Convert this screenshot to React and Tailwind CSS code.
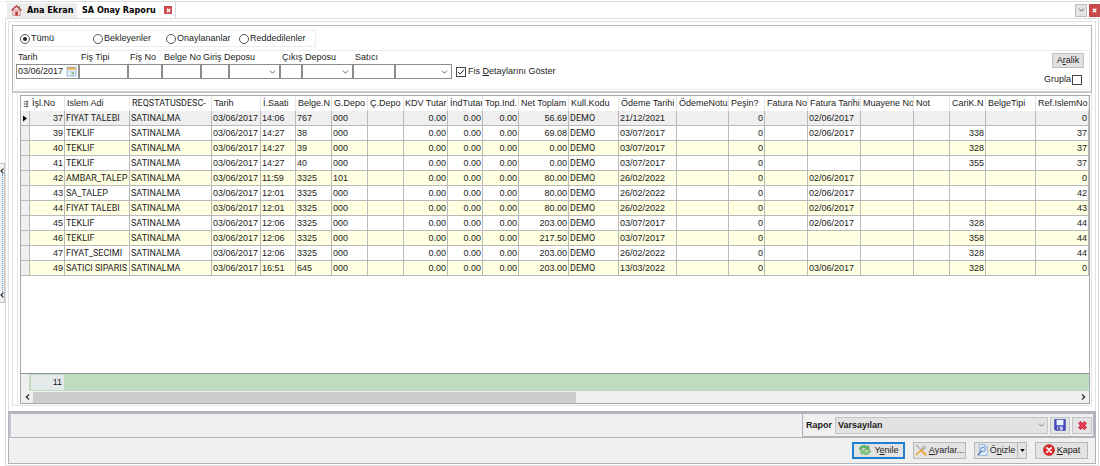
import React, { useState } from 'react'

const COLUMNS = [
  { key: 'no', label: 'İşl.No', col: 'w-[35px]', align: 'right' },
  { key: 'ad', label: 'Islem Adi', col: 'w-[65px]', font: 'font-[Roboto,sans-serif]' },
  { key: 'status', label: 'REQSTATUSDESC-', col: 'w-[82px]', font: 'font-[Roboto,sans-serif]' },
  { key: 'tarih', label: 'Tarih', col: 'w-[49px]' },
  { key: 'saat', label: 'İ.Saati', col: 'w-[35px]' },
  { key: 'belge', label: 'Belge.N', col: 'w-[36px]' },
  { key: 'gDepo', label: 'G.Depo', col: 'w-[36px]' },
  { key: 'cDepo', label: 'Ç.Depo', col: 'w-[36px]' },
  { key: 'kdv', label: 'KDV Tutar', col: 'w-[44px]', align: 'right' },
  { key: 'ind', label: 'İndTutar', col: 'w-[35px]', align: 'right' },
  { key: 'topInd', label: 'Top.Ind.', col: 'w-[36px]', align: 'right' },
  { key: 'net', label: 'Net Toplam', col: 'w-[50px]', align: 'right' },
  { key: 'kull', label: 'Kull.Kodu', col: 'w-[50px]', font: 'font-[Roboto,sans-serif]' },
  { key: 'odeme', label: 'Ödeme Tarihi', col: 'w-[58px]' },
  { key: 'not1', label: 'ÖdemeNotu', col: 'w-[52px]' },
  { key: 'pesin', label: 'Peşin?', col: 'w-[36px]', align: 'right' },
  { key: 'faturaNo', label: 'Fatura No', col: 'w-[43px]' },
  { key: 'fatura', label: 'Fatura Tarihi', col: 'w-[53px]' },
  { key: 'muayene', label: 'Muayene No', col: 'w-[53px]' },
  { key: 'not2', label: 'Not', col: 'w-[36px]' },
  { key: 'cari', label: 'CariK.N', col: 'w-[36px]', align: 'right' },
  { key: 'tip', label: 'BelgeTipi', col: 'w-[50px]' },
  { key: 'ref', label: 'Ref.IslemNo', col: '', align: 'right' },
]

const makeRow = (no, ad, saat, belge, gDepo, net, odeme, fatura, cari, ref) => ({
  no, ad, saat, belge, gDepo, net, odeme, fatura, cari, ref,
  status: 'SATINALMA',
  tarih: '03/06/2017',
  kdv: '0.00',
  ind: '0.00',
  topInd: '0.00',
  kull: 'DEMO',
  pesin: '0',
})

const ROWS = [
  makeRow(37, 'FIYAT TALEBI', '14:06', '767', '000', '56.69', '21/12/2021', '02/06/2017', '', '0'),
  makeRow(39, 'TEKLIF', '14:27', '38', '000', '69.08', '03/07/2017', '02/06/2017', '338', '37'),
  makeRow(40, 'TEKLIF', '14:27', '39', '000', '0.00', '03/07/2017', '', '328', '37'),
  makeRow(41, 'TEKLIF', '14:27', '40', '000', '0.00', '03/07/2017', '', '355', '37'),
  makeRow(42, 'AMBAR_TALEP', '11:59', '3325', '101', '80.00', '26/02/2022', '02/06/2017', '', '0'),
  makeRow(43, 'SA_TALEP', '12:01', '3325', '000', '80.00', '26/02/2022', '02/06/2017', '', '42'),
  makeRow(44, 'FIYAT TALEBI', '12:01', '3325', '000', '80.00', '26/02/2022', '02/06/2017', '', '43'),
  makeRow(45, 'TEKLIF', '12:06', '3325', '000', '203.00', '03/07/2017', '02/06/2017', '328', '44'),
  makeRow(46, 'TEKLIF', '12:06', '3325', '000', '217.50', '03/07/2017', '', '358', '44'),
  makeRow(47, 'FIYAT_SECIMI', '12:06', '3325', '000', '203.00', '26/02/2022', '', '328', '44'),
  makeRow(49, 'SATICI SIPARIS', '16:51', '645', '000', '203.00', '13/03/2022', '03/06/2017', '328', '0'),
]

const STATUSES = ['Tümü', 'Bekleyenler', 'Onaylananlar', 'Reddedilenler']

const Chevron = ({ className }) => (
  <svg viewBox="0 0 8 5" className={className} fill="none" stroke="currentColor" strokeWidth="1.1">
    <path d="M0.8 0.8 4 4 7.2 0.8" />
  </svg>
)

const HomeIcon = () => (
  <svg viewBox="0 0 12 12" className="h-[11px] w-[11px]">
    <path d="M2 5.5h8v6H2z" fill="#f4dcdc" stroke="#b05a5a" strokeWidth="0.6" />
    <path d="M0.6 6 6 1l5.4 5" fill="none" stroke="#b8474a" strokeWidth="1.7" />
    <path d="M4.6 7.2h3v4.3h-3z" fill="#c03a3e" />
    <path d="M8.6 1.4h1.2v2H8.6z" fill="#8a6a6a" />
  </svg>
)

const CalendarIcon = () => (
  <svg viewBox="0 0 12 12" className="h-[11px] w-[11px]">
    <path d="M1.5 1.5h9v9h-9z" fill="#f4f8fb" stroke="#8fb4cc" strokeWidth="0.8" />
    <path d="M1.5 1.5h9V4h-9z" fill="#e9a94e" />
    <path d="M3 5.7h6M3 7.6h2.4" stroke="#9fc0d6" strokeWidth="0.8" />
    <path d="M6 6.8h3v2.4H6z" fill="#7fb58a" />
  </svg>
)

const RefreshIcon = () => (
  <svg viewBox="0 0 14 12" className="h-3 w-[14px]">
    <path d="M1 5.2C1.6 1.6 6.400.1 9.200 2.500L10.800 1.400 11.400 6 6.600 5.800 7.800 4.400C6.200 3.200 4.200 3.600 3.600 5.400z" fill="#62b562" stroke="#4b9a50" strokeWidth="0.4" />
    <path d="M13 6.800C12.400 10.400 7.600 11.900 4.800 9.500L3.200 10.600 2.600 6l4.800.2L6.200 7.600C7.800 8.800 9.800 8.400 10.400 6.600z" fill="#85c983" stroke="#4b9a50" strokeWidth="0.4" />
  </svg>
)

const ToolsIcon = () => (
  <svg viewBox="0 0 13 13" className="h-3 w-3" fill="none" strokeLinecap="round">
    <path d="M1.600 11.600 8 5.200" stroke="#e8ad4c" strokeWidth="1.800" />
    <path d="M8 5.500c-.9-2 .4-4 2.500-4L9.300 3l.8 1.200 1.700-.8c.2 2-1.800 3.300-3.800 2.100z" fill="#b7bcc1" stroke="#9aa0a6" strokeWidth="0.5" />
    <path d="M1.500 1.200 6.500 6.400" stroke="#a9aeb3" strokeWidth="1.400" />
    <path d="M7 7l4.300 4.500" stroke="#eba43b" strokeWidth="2.300" />
  </svg>
)

const PreviewIcon = () => (
  <svg viewBox="0 0 12 13" className="h-3 w-[11px]">
    <path d="M2.500.6h6l2.600 2.600v9.200H2.500z" fill="#e6f0fb" stroke="#7fa3d0" strokeWidth="0.8" />
    <path d="M8.500.6v2.600h2.600" fill="#c4d9f1" stroke="#7fa3d0" strokeWidth="0.7" />
    <circle cx="6.500" cy="6" r="2.500" fill="#cfe4fa" stroke="#5b84c0" strokeWidth="1" />
    <path d="M4.700 8 1.200 11.800" stroke="#4c6fae" strokeWidth="1.500" strokeLinecap="round" />
  </svg>
)

const CloseIcon = () => (
  <svg viewBox="0 0 13 13" className="h-3 w-3">
    <circle cx="6.500" cy="6.500" r="6" fill="#dd2a2a" stroke="#b81a1a" strokeWidth="0.6" />
    <path d="M4.200 4.200l4.600 4.600M8.800 4.200 4.200 8.800" stroke="#fff" strokeWidth="1.900" strokeLinecap="round" />
  </svg>
)

const SaveIcon = () => (
  <svg viewBox="0 0 12 12" className="h-3 w-3">
    <path d="M.6.6h10.800v10.800H1.800L.6 10.200z" fill="#4a4ac6" stroke="#33339c" strokeWidth="0.6" />
    <path d="M2.600.9h6.800v5.300H2.600z" fill="#eaf2fb" />
    <path d="M3.200 7.600h5.600v3.600H3.200z" fill="#c9d4ea" />
    <path d="M4.200 8.200h1.500v2.800H4.200z" fill="#2b2b86" />
  </svg>
)

const DeleteIcon = () => (
  <svg viewBox="0 0 11 11" className="h-[11px] w-[11px]">
    <path d="M2.300 2.300l6.400 6.400M8.700 2.300 2.300 8.700" stroke="#c22340" strokeWidth="3.600" />
    <path d="M2.500 2.500l6 6M8.500 2.500l-6 6" stroke="#ee3f55" strokeWidth="2.200" />
  </svg>
)

const CrossIcon = ({ className }) => (
  <svg viewBox="0 0 8 8" className={className}>
    <path d="M2 2l4 4M6 2 2 6" stroke="#fff" strokeWidth="1.400" />
  </svg>
)

const FilterGroup = ({ label, id, width, children }) => (
  <div className={`flex flex-col ${width}`}>
    <label htmlFor={id} className="h-[13px] whitespace-nowrap pl-[2px] leading-[13px]">{label}</label>
    <div className="flex">{children}</div>
  </div>
)

const Field = ({ id, name, width }) => (
  <input
    id={id}
    aria-label={name}
    className={`h-[15px] min-w-0 border border-[#8c8c8c] bg-white px-px outline-none ${width}`}
  />
)

const Combo = ({ name, width }) => (
  <div className={`grid items-center ${width}`}>
    <select
      aria-label={name}
      className="col-start-1 row-start-1 h-[15px] w-full appearance-none border border-[#8c8c8c] bg-white outline-none"
    >
      <option></option>
    </select>
    <Chevron className="pointer-events-none col-start-1 row-start-1 mr-1 h-1 w-[7px] justify-self-end text-[#555]" />
  </div>
)

const Check = ({ id, checked, onChange }) => (
  <span className="grid place-items-center">
    <input
      id={id}
      type="checkbox"
      checked={checked}
      onChange={onChange}
      className="col-start-1 row-start-1 h-[10px] w-[10px] appearance-none border border-[#444] bg-white"
    />
    {checked && (
      <svg viewBox="0 0 10 10" className="pointer-events-none col-start-1 row-start-1 h-[10px] w-[10px]">
        <path d="M2.200 5 4.200 7 8 2.800" fill="none" stroke="#222" strokeWidth="1" />
      </svg>
    )}
  </span>
)

const ActionButton = ({ icon, children, focused }) => (
  <button
    className={`flex h-[17px] w-[53px] items-center justify-center gap-[2px] whitespace-nowrap bg-[#e3e3e3] ${
      focused ? 'border-2 border-[#1f7fd0]' : 'border border-[#b8b8b8]'
    }`}
  >
    {icon}
    <span>{children}</span>
  </button>
)

const App = () => {
  const [status, setStatus] = useState('Tümü')
  const [details, setDetails] = useState(true)
  const [grouped, setGrouped] = useState(false)
  const [date, setDate] = useState('03/06/2017')

  const rowColor = (index) => {
    if (index === 0) return 'bg-[#efefef]'
    return index % 2 === 0 ? 'bg-[#ffffe1]' : 'bg-white'
  }

  return (
    <div className="flex h-screen min-h-[400px] bg-white font-['Liberation_Sans',Arial,sans-serif] text-[9px] leading-[11px] text-[#1c1c1c]">
      {/* Collapsed side panel handle */}
      <div className="flex w-[5px] shrink-0 flex-col justify-center">
        <button
          aria-label="Paneli aç"
          className="flex h-[140px] w-[5px] flex-col items-center justify-between border border-l-0 border-[#c4c4c4] bg-[#f0f0f0] py-1"
        >
          <svg viewBox="0 0 4 6" className="h-[6px] w-1"><path d="M3.400.6 1 3l2.400 2.400" fill="none" stroke="#222" strokeWidth="1.100" /></svg>
          <span className="w-px flex-1 border-l border-dotted border-[#4fa3ea]" />
          <svg viewBox="0 0 4 6" className="h-[6px] w-1"><path d="M3.400.6 1 3l2.400 2.400" fill="none" stroke="#222" strokeWidth="1.100" /></svg>
        </button>
      </div>

      <div className="flex min-w-0 flex-1 flex-col pt-px">
        {/* Tabs */}
        <div className="flex h-[17px] shrink-0 border-t border-[#dcdcdc] pl-[2px] font-['DejaVu_Sans_Condensed','DejaVu_Sans',sans-serif] font-bold text-black">
          <button className="mt-px flex w-[70px] items-center gap-[5px] whitespace-nowrap bg-[#ececec] pl-1">
            <HomeIcon />
            Ana Ekran
          </button>
          <button className="flex w-[99px] items-center justify-between whitespace-nowrap border-r border-[#dcdcdc] bg-white pl-[5px] pr-[3px]">
            SA Onay Raporu
            <span className="flex h-2 w-2 items-center justify-center bg-[#c9484c]">
              <CrossIcon className="h-[7px] w-[7px]" />
            </span>
          </button>
          <div className="ml-auto flex items-center gap-[2px]">
            <button aria-label="Sekmeler" className="flex h-[13px] w-3 items-center justify-center border border-[#bdbdbd] bg-[#e4e4e4]">
              <Chevron className="h-1 w-[7px] text-[#555]" />
            </button>
            <button aria-label="Kapat" className="flex h-[13px] w-[11px] items-center justify-center bg-[#c9484c]">
              <CrossIcon className="h-[7px] w-[7px]" />
            </button>
          </div>
        </div>

        <div className="mr-px flex min-h-0 flex-1 flex-col border border-[#dcdcdc] p-[2px] pb-px">
          <div className="flex min-h-0 flex-1 flex-col border border-b-0 border-[#e2e2e2] px-[3px] pb-[5px] pt-[3px]">
            {/* Filters */}
            <div className="shrink-0 border border-[#b4b6bc] border-b-2 border-b-[#c6c8cc] px-px pb-px pt-1">
              <div className="flex h-[17px] w-[302px] items-center border border-[#ececec] pl-[5px]">
                {STATUSES.map((name) => (
                  <label key={name} className="flex w-[73px] items-center gap-px whitespace-nowrap">
                    <input
                      type="radio"
                      name="status"
                      checked={status === name}
                      onChange={() => setStatus(name)}
                      className="h-[10px] w-[10px] appearance-none rounded-full border border-[#555] bg-white bg-clip-content p-[2px] checked:bg-[#222]"
                    />
                    {name}
                  </label>
                ))}
              </div>

              <div className="mt-[3px] flex h-[40px] border border-[#ececec] pl-px">
                <FilterGroup label="Tarih" id="tarih" width="w-[63px]">
                  <div className="flex h-[15px] w-full items-center border border-[#8c8c8c] bg-white pr-px">
                    <input
                      id="tarih"
                      value={date}
                      onChange={(e) => setDate(e.target.value)}
                      className="min-w-0 flex-1 bg-transparent pl-px outline-none"
                    />
                    <button aria-label="Takvim" className="shrink-0 bg-[#d9e9f4]"><CalendarIcon /></button>
                  </div>
                </FilterGroup>
                <FilterGroup label="Fiş Tipi" id="fistipi" width="w-[49px]">
                  <Field id="fistipi" name="Fiş Tipi" width="w-full" />
                </FilterGroup>
                <FilterGroup label="Fiş No" id="fisno" width="w-[34px]">
                  <Field id="fisno" name="Fiş No" width="w-full" />
                </FilterGroup>
                <FilterGroup label="Belge No" id="belgeno" width="w-[39px]">
                  <Field id="belgeno" name="Belge No" width="w-full" />
                </FilterGroup>
                <FilterGroup label="Giriş Deposu" id="giris" width="w-[79px]">
                  <Field id="giris" name="Giriş Deposu" width="w-7" />
                  <Combo name="Giriş deposu adı" width="w-[51px]" />
                </FilterGroup>
                <FilterGroup label="Çıkış Deposu" id="cikis" width="w-[73px]">
                  <Field id="cikis" name="Çıkış Deposu" width="w-[22px]" />
                  <Combo name="Çıkış deposu adı" width="w-[51px]" />
                </FilterGroup>
                <FilterGroup label="Satıcı" id="satici" width="w-[99px]">
                  <Field id="satici" name="Satıcı" width="w-[42px]" />
                  <Combo name="Satıcı adı" width="w-[57px]" />
                </FilterGroup>
                <div className="mt-[13px] flex h-[15px] items-center gap-[2px] self-start whitespace-nowrap pl-1">
                  <Check id="detay" checked={details} onChange={() => setDetails(!details)} />
                  <label htmlFor="detay">Fis <u>D</u>etaylarını Göster</label>
                </div>
                <div className="ml-auto flex flex-col items-end gap-[6px] pr-[5px] pt-[2px]">
                  <button className="h-[15px] w-8 border border-[#bdbdbd] bg-[#e1e1e1]">A<u>r</u>alik</button>
                  <div className="flex items-center gap-px pr-[2px]">
                    <label htmlFor="grupla">Grupla</label>
                    <Check id="grupla" checked={grouped} onChange={() => setGrouped(!grouped)} />
                  </div>
                </div>
              </div>
            </div>

            {/* Grid */}
            <div className="flex min-h-0 flex-1 border border-t-0 border-[#e4e4e4] pl-1">
              <div className="flex min-w-0 flex-1 flex-col border-l border-[#e4e4e4] pb-px pl-[2px] pr-px pt-[2px]">
                <div className="flex min-h-0 flex-1 flex-col border border-[#a3a6ad]">
                  <div className="min-h-0 flex-1 overflow-hidden">
                    <table className="w-full table-fixed border-separate border-spacing-0">
                      <colgroup>
                        <col className="w-[9px]" />
                        {COLUMNS.map((c) => <col key={c.key} className={c.col} />)}
                      </colgroup>
                      <thead>
                        <tr>
                          <th className="h-[15px] p-0">
                            <svg viewBox="0 0 7 8" className="mx-auto h-2 w-[6px]">
                              <path d="M1 1h1M1 3h1M1 5h1M1 7h1M3 1h3M3 3h3M3 5h3M3 7h3" stroke="#222" strokeWidth="1" />
                            </svg>
                          </th>
                          {COLUMNS.map((c) => (
                            <th
                              key={c.key}
                              className={`h-[15px] overflow-hidden whitespace-nowrap border-r border-[#e6e6e6] p-0 text-left font-normal ${
                                c.key === 'kdv' ? 'pl-px' : 'pl-[2px]'
                              } ${c.key === 'status' ? c.font : ''}`}
                            >
                              {c.label}
                            </th>
                          ))}
                        </tr>
                      </thead>
                      <tbody>
                        {ROWS.map((row, i) => (
                          <tr key={row.no} className={rowColor(i)}>
                            <td className="h-[15px] border-b border-r border-[#b9b9b9] bg-[#efefef] p-0">
                              {i === 0 && (
                                <svg viewBox="0 0 4 6" className="mx-auto h-[7px] w-1"><path d="M0 0 4 3 0 6z" fill="#000" /></svg>
                              )}
                            </td>
                            {COLUMNS.map((c) => (
                              <td
                                key={c.key}
                                className={`h-[15px] overflow-hidden whitespace-nowrap border-b border-r border-[#b9b9b9] p-0 ${
                                  c.align === 'right' ? 'pr-px text-right' : 'pl-px text-left'
                                } ${c.font || ''}`}
                              >
                                {row[c.key]}
                              </td>
                            ))}
                          </tr>
                        ))}
                      </tbody>
                    </table>
                  </div>

                  {/* Row count */}
                  <div className="flex h-[18px] shrink-0 border-t border-[#8f9190] bg-[#c0dcc0]">
                    <div className="w-2 bg-[#efefef]" />
                    <div className="my-px ml-[2px] w-[33px] bg-[#e4e9e9] pr-[2px] text-right leading-[15px]">{ROWS.length}</div>
                  </div>

                  {/* Scrollbar */}
                  <div className="flex h-3 shrink-0 items-center bg-[#f0f0f0]">
                    <button aria-label="Sola kaydır" className="flex w-3 justify-center">
                      <svg viewBox="0 0 5 6" className="h-[6px] w-[5px]"><path d="M4 .6 1.400 3 4 5.400" fill="none" stroke="#333" strokeWidth="1.300" /></svg>
                    </button>
                    <div className="flex-1">
                      <div className="h-[11px] w-[52%] bg-[#cdcdcd]" />
                    </div>
                    <button aria-label="Sağa kaydır" className="flex w-3 justify-center">
                      <svg viewBox="0 0 5 6" className="h-[6px] w-[5px]"><path d="M1 .6 3.600 3 1 5.400" fill="none" stroke="#333" strokeWidth="1.300" /></svg>
                    </button>
                  </div>
                </div>
              </div>
            </div>
          </div>

          {/* Bottom bars */}
          <div className="shrink-0 border border-[#b0b3ba] bg-[#f0f0f0]">
            <div className="flex justify-end border-2 border-b border-[#b0b3ba] border-l-[#c4c6cb]">
              <div className="flex h-[23px] items-center gap-[2px] border-b border-l border-[#b0b3ba] pl-[3px] pr-px">
                <label htmlFor="rapor" className="w-[27px] font-bold">Rapor</label>
                <div className="grid w-[213px] items-center">
                  <select
                    id="rapor"
                    className="col-start-1 row-start-1 h-[17px] appearance-none border border-[#c4c4c4] bg-[#e2e2e2] pl-[2px] font-bold outline-none"
                  >
                    <option>Varsayılan</option>
                  </select>
                  <Chevron className="pointer-events-none col-start-1 row-start-1 mr-[3px] h-1 w-[7px] justify-self-end text-[#777]" />
                </div>
                <button aria-label="Kaydet" className="flex h-[17px] w-5 items-center justify-center border border-[#c4c4c4] bg-[#e4e4e4]">
                  <SaveIcon />
                </button>
                <button aria-label="Sil" className="flex h-[17px] w-5 items-center justify-center border border-[#c4c4c4] bg-[#e4e4e4]">
                  <DeleteIcon />
                </button>
              </div>
            </div>
            <div className="flex h-[25px] items-center justify-end gap-2 pb-px pr-[7px]">
              <ActionButton icon={<RefreshIcon />} focused>Y<u>e</u>nile</ActionButton>
              <ActionButton icon={<ToolsIcon />}><u>A</u>yarlar...</ActionButton>
              <div className="flex h-[17px] w-[53px] border border-[#b8b8b8] bg-[#e3e3e3]">
                <button className="flex flex-1 items-center justify-center gap-[2px]">
                  <PreviewIcon />
                  <span>Ö<u>n</u>izle</span>
                </button>
                <button aria-label="Önizleme seçenekleri" className="flex w-[9px] items-center justify-center border-l border-[#b8b8b8]">
                  <svg viewBox="0 0 6 4" className="h-[3px] w-[5px]"><path d="M0 0h6L3 4z" fill="#000" /></svg>
                </button>
              </div>
              <ActionButton icon={<CloseIcon />}><u>K</u>apat</ActionButton>
            </div>
          </div>
        </div>
      </div>
    </div>
  )
}

export default App
